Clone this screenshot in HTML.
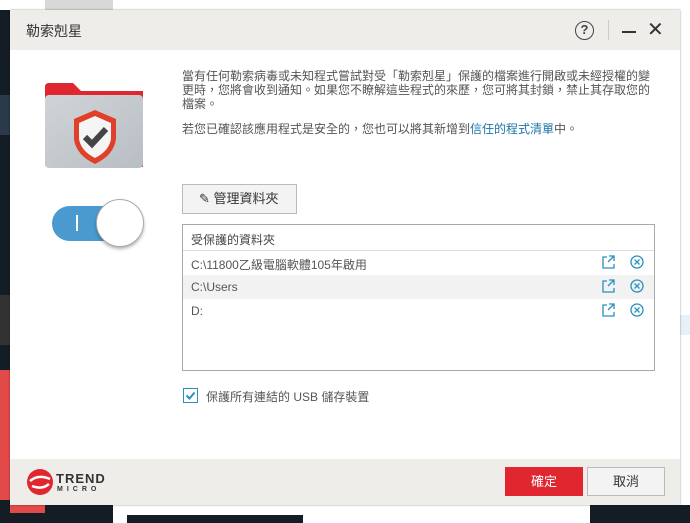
<!DOCTYPE html>
<html><head><meta charset="utf-8"><style>
*{margin:0;padding:0;box-sizing:border-box}
body{width:690px;height:523px;overflow:hidden;position:relative;background:#141d26;font-family:"Liberation Sans","Noto Sans CJK TC",sans-serif;color:#555;font-size:12px}
.abs{position:absolute}
</style></head><body>
<div class="abs" style="left:0;top:0;width:690px;height:10px;background:#fff"></div>
<div class="abs" style="left:45px;top:0;width:68px;height:10px;background:#d8d8d8"></div>
<div class="abs" style="left:113px;top:0;width:577px;height:523px;background:#fff"></div>
<div class="abs" style="left:0;top:95px;width:10px;height:40px;background:#2a3a4a"></div>
<div class="abs" style="left:0;top:295px;width:10px;height:50px;background:#333"></div>
<div class="abs" style="left:0;top:370px;width:12px;height:130px;background:#e24a4a"></div>
<div class="abs" style="left:127px;top:515px;width:176px;height:8px;background:#141d26"></div>
<div class="abs" style="left:590px;top:505px;width:100px;height:18px;background:#141d26"></div>
<div class="abs" style="left:10px;top:505px;width:35px;height:8px;background:#e24a4a"></div>
<div class="abs" style="left:680px;top:315px;width:10px;height:20px;background:#e8f0fa"></div>

<div class="abs" style="left:10px;top:10px;width:670px;height:495px;background:#fff;box-shadow:0 0 2px rgba(0,0,0,.4)">
 <div class="abs" style="left:0;top:0;width:670px;height:40px;background:#eeedea"></div>
 <div class="abs" style="left:16px;top:11px;font-size:14px;color:#333">勒索剋星</div>
 <div class="abs" style="left:565px;top:11px;width:19px;height:19px;border:1.5px solid #444;border-radius:50%;font-size:13px;font-weight:bold;text-align:center;line-height:16px;color:#444">?</div>
 <div class="abs" style="left:598px;top:10px;width:1px;height:20px;background:#ccc"></div>
 <div class="abs" style="left:612px;top:21px;width:14px;height:2px;background:#333"></div>
 <div class="abs" style="left:637px;top:9px;font-size:20px;color:#333;line-height:22px">✕</div>

 <svg class="abs" style="left:35px;top:73px" width="98" height="85" viewBox="0 0 98 85">
  <defs><linearGradient id="g" x1="0" y1="0" x2="1" y2="1"><stop offset="0" stop-color="#d0d4d8"/><stop offset="1" stop-color="#b9bec4"/></linearGradient></defs>
  <path d="M0 4Q0 0 4 0H28L36 8H98V84H4Q0 84 0 80Z" fill="#e0262f"/>
  <rect x="0" y="12" width="98" height="73" rx="4" fill="url(#g)"/>
  <path d="M50 27L71 36V56Q69 72 50 81Q31 72 29 56V36Z" fill="#e0402a"/>
  <path d="M50 33L66 40V56Q64 68 50 75Q36 68 34 56V40Z" fill="#f5f5f5"/>
  <path d="M40 54L47 61L61 46" fill="none" stroke="#444" stroke-width="6"/>
 </svg>

 <div class="abs" style="left:42px;top:196px;width:82px;height:35px;background:#4a9ad0;border-radius:18px"></div>
 <div class="abs" style="left:66px;top:205px;width:2px;height:16px;background:#fff"></div>
 <div class="abs" style="left:86px;top:189px;width:48px;height:48px;background:#fff;border:1px solid #aaa;border-radius:50%;box-shadow:0 2px 3px rgba(0,0,0,.3)"></div>

 <div class="abs" style="left:172px;top:59px;width:470px;line-height:14px">當有任何勒索病毒或未知程式嘗試對受「勒索剋星」保護的檔案進行開啟或未經授權的變更時，您將會收到通知。如果您不瞭解這些程式的來歷，您可將其封鎖，禁止其存取您的檔案。</div>
 <div class="abs" style="left:172px;top:112px;line-height:14px">若您已確認該應用程式是安全的，您也可以將其新增到<span style="color:#1a73a8">信任的程式清單</span>中。</div>

 <div class="abs" style="left:172px;top:174px;width:115px;height:30px;border:1px solid #bbb;background:#f3f3f3;font-size:13px;line-height:28px;padding-left:16px;color:#333">✎ 管理資料夾</div>

 <div class="abs" style="left:172px;top:214px;width:473px;height:147px;border:1px solid #aaa">
  <div class="abs" style="left:8px;top:6px;font-size:12px;color:#444">受保護的資料夾</div>
  <div class="abs" style="left:0;top:25px;width:471px;height:1px;background:#ddd"></div>
  <div class="abs" style="left:0;top:50px;width:471px;height:24px;background:#f2f2f2"></div>
  <div class="abs" style="left:8px;top:31px">C:\11800乙級電腦軟體105年啟用</div>
  <div class="abs" style="left:8px;top:55px">C:\Users</div>
  <div class="abs" style="left:8px;top:79px">D:</div>
  <svg class="abs" style="left:419px;top:30px" width="46" height="74" viewBox="0 0 46 74">
   <g fill="none" stroke="#2b8fc0" stroke-width="1.3">
    <g id="r"><path d="M5 2H1V13H12V9M7 1H12V6M12 1L6 7"/><circle cx="35" cy="7" r="6"/><path d="M32.5 4.5L37.5 9.5M37.5 4.5L32.5 9.5"/></g>
    <use href="#r" y="24"/><use href="#r" y="48"/>
   </g>
  </svg>
 </div>

 <svg class="abs" style="left:173px;top:378px" width="15" height="15" viewBox="0 0 15 15"><rect x="0.5" y="0.5" width="14" height="14" fill="#fff" stroke="#2b8fc0"/><path d="M3.5 7.5L6.5 10.5L11.5 4.5" fill="none" stroke="#2b8fc0" stroke-width="2"/></svg>
 <div class="abs" style="left:196px;top:378px;font-size:12px">保護所有連結的 USB 儲存裝置</div>

 <div class="abs" style="left:0;top:449px;width:670px;height:46px;background:#eeedea"></div>
 <svg class="abs" style="left:16px;top:458px" width="28" height="28" viewBox="0 0 28 28"><circle cx="14" cy="14" r="13" fill="#e0262f"/><path d="M4 13Q12 6 24 11M6 18Q16 22 23 16" stroke="#fff" stroke-width="2.5" fill="none"/></svg>
 <div class="abs" style="left:46px;top:462px;font-size:13px;font-weight:bold;color:#333;letter-spacing:1px;line-height:13px">TREND</div>
 <div class="abs" style="left:47px;top:476px;font-size:7px;font-weight:bold;color:#333;letter-spacing:4px">MICRO</div>
 <div class="abs" style="left:495px;top:457px;width:78px;height:29px;background:#e0262f;color:#fff;font-size:13px;text-align:center;line-height:29px">確定</div>
 <div class="abs" style="left:577px;top:457px;width:78px;height:29px;background:#f3f3f3;border:1px solid #bbb;color:#333;font-size:13px;text-align:center;line-height:27px">取消</div>
</div>
</body></html>
